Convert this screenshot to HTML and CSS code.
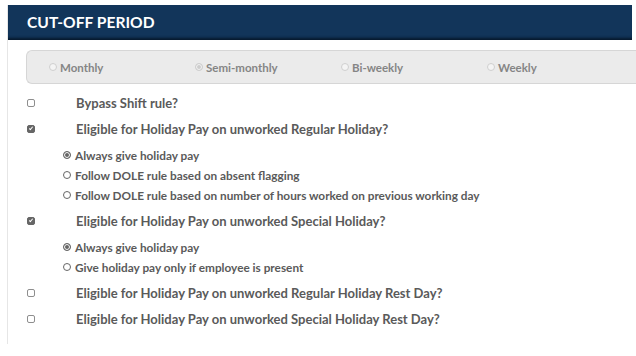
FILE: index.html
```html
<!DOCTYPE html>
<html lang="en">
<head>
    <meta charset="UTF-8">
    <meta name="viewport" content="width=device-width, initial-scale=1.0">
    <title>Cut-off Period</title>
    <link rel="stylesheet" href="styles.css">
</head>
<body>
    <div class="panel">
        <div class="panel-header">CUT-OFF PERIOD</div>
        <div class="panel-body">
            <div class="period-bar">
                <label class="period"><span class="radio"></span>Monthly</label>
                <label class="period"><span class="radio checked"></span>Semi-monthly</label>
                <label class="period"><span class="radio"></span>Bi-weekly</label>
                <label class="period"><span class="radio"></span>Weekly</label>
            </div>

            <div class="options">
                <div class="option">
                    <span class="check"></span>
                    <span>Bypass Shift rule?</span>
                </div>
                <div class="option">
                    <span class="check checked"></span>
                    <span>Eligible for Holiday Pay on unworked Regular Holiday?</span>
                </div>
                <div class="sub-options">
                    <div class="sub"><span class="dot checked"></span>Always give holiday pay</div>
                    <div class="sub"><span class="dot"></span>Follow DOLE rule based on absent flagging</div>
                    <div class="sub"><span class="dot"></span>Follow DOLE rule based on number of hours worked on previous working day</div>
                </div>
                <div class="option">
                    <span class="check checked"></span>
                    <span>Eligible for Holiday Pay on unworked Special Holiday?</span>
                </div>
                <div class="sub-options">
                    <div class="sub"><span class="dot checked"></span>Always give holiday pay</div>
                    <div class="sub"><span class="dot"></span>Give holiday pay only if employee is present</div>
                </div>
                <div class="option">
                    <span class="check"></span>
                    <span>Eligible for Holiday Pay on unworked Regular Holiday Rest Day?</span>
                </div>
                <div class="option">
                    <span class="check"></span>
                    <span>Eligible for Holiday Pay on unworked Special Holiday Rest Day?</span>
                </div>
            </div>
        </div>
    </div>
</body>
</html>
```

FILE: styles.css
```css
/* Basic Styling */
body {
    font-family: Lato, "Open Sans", sans-serif;
    background: #fff;
    margin: 0;
    padding: 5px 4px 10px 7px;
}

.panel {
    border-left: 1px solid #e6e6e6;
}

.panel-header {
    background: #12355a;
    box-shadow: inset 0 -4px 3px -2px #06182b;
    color: #fff;
    font-weight: bold;
    font-size: 15.6px;
    padding: 8px 0 8px 19px;
    height: 19px;
    line-height: 19px;
}

.panel-body {
    padding: 10px 0 12px 18px;
}

.period-bar {
    display: flex;
    background: #ebebeb;
    border: 1px solid #d6d6d6;
    border-right: none;
    border-radius: 6px 0 0 6px;
    margin-right: -4px;
    height: 32px;
    align-items: center;
    padding-left: 22px;
}

.period {
    width: 146px;
    display: flex;
    align-items: center;
    font-size: 11.5px;
    font-weight: bold;
    color: #858585;
}

.radio {
    width: 6px;
    height: 6px;
    border: 1px solid #cfcfcf;
    border-radius: 50%;
    background: #f4f4f4;
    margin-right: 3px;
}

.radio.checked {
    background: #cdcdcd;
    box-shadow: inset 0 0 0 1px #f4f4f4;
}

.options {
    margin-top: 6px;
    color: #5a5a5a;
    font-weight: bold;
}

.option {
    display: flex;
    align-items: center;
    height: 26px;
    font-size: 13px;
}

.check {
    position: relative;
    width: 6px;
    height: 6px;
    border: 1px solid #8e8e8e;
    border-radius: 2px;
    margin-left: 1px;
    margin-right: 41px;
}

.check.checked {
    background: #666;
    border-color: #666;
}

.check.checked::after {
    content: "";
    position: absolute;
    left: 2px;
    top: 0;
    width: 1px;
    height: 3px;
    border-right: 1px solid #fff;
    border-bottom: 1px solid #fff;
    transform: rotate(40deg);
}

.sub-options {
    padding: 3px 0 3px 37px;
}

.sub {
    display: flex;
    align-items: center;
    font-size: 11.8px;
    height: 20px;
}

.dot {
    width: 6px;
    height: 6px;
    border: 1px solid #666;
    border-radius: 50%;
    margin-right: 4px;
}

.dot.checked {
    background: #666;
    box-shadow: inset 0 0 0 1px #fff;
}
```
